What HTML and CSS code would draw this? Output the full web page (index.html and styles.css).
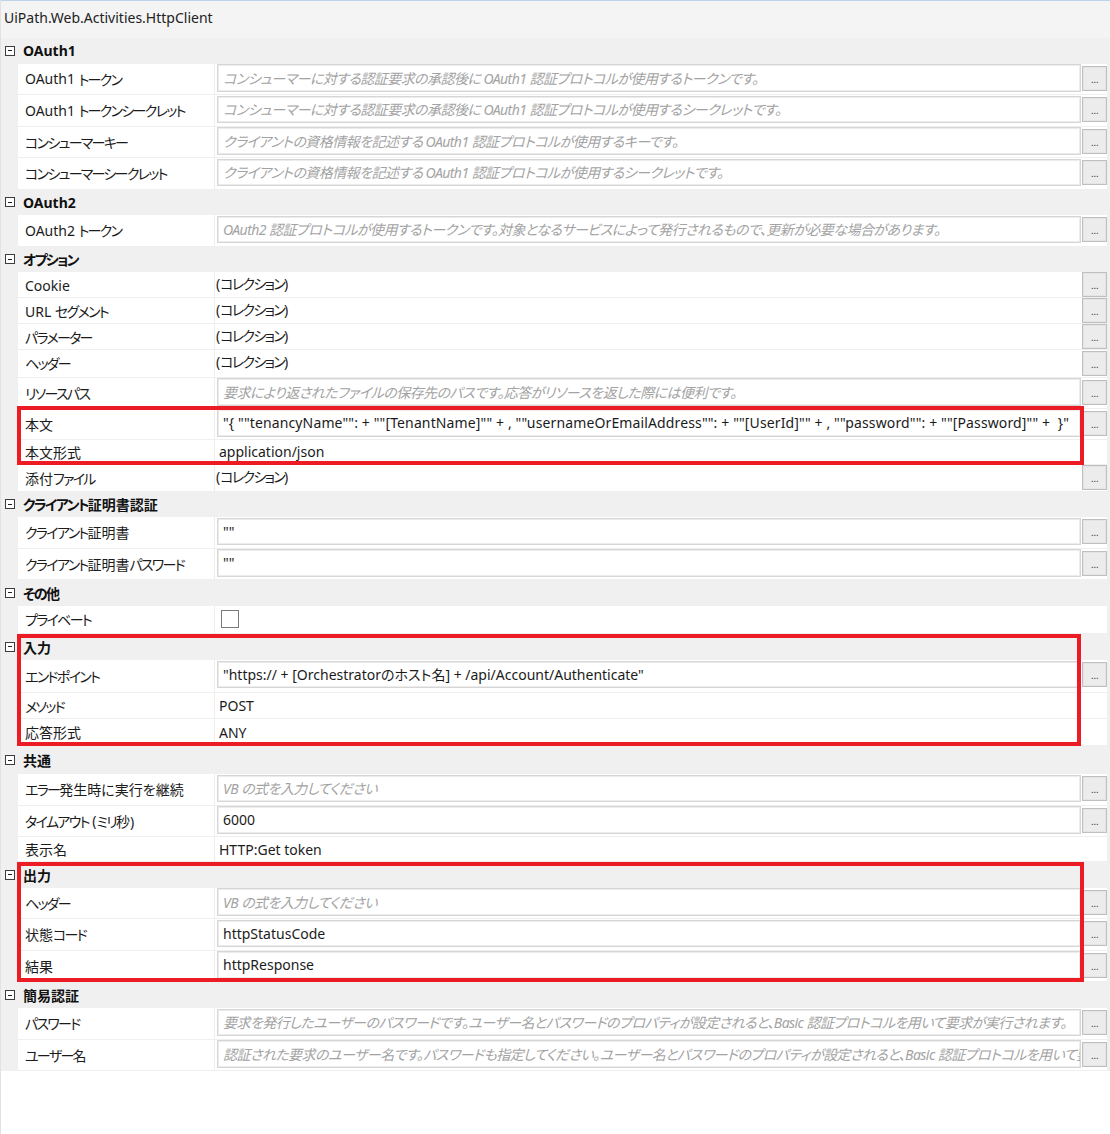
FILE: index.html
```html
<!DOCTYPE html>
<html lang="ja">
<head>
<meta charset="utf-8">
<title>HttpClient Properties</title>
<link rel="stylesheet" href="styles.css">
</head>
<body>
<div class="pg">
  <div class="title">UiPath.Web.Activities.HttpClient</div>

  <div class="cat"><span class="tog"></span><span class="cat-name">OAuth1</span></div>
  <div class="row tb"><div class="lbl">OAuth1&nbsp;<span class="k">トークン</span></div><div class="val"><div class="box ph">コンシューマーに対する認証要求の承認後に OAuth1 認証プロトコルが使用するトークンです。</div></div><div class="bc"><span class="btn">...</span></div></div>
  <div class="row tb"><div class="lbl">OAuth1&nbsp;<span class="k">トークンシークレット</span></div><div class="val"><div class="box ph">コンシューマーに対する認証要求の承認後に OAuth1 認証プロトコルが使用するシークレットです。</div></div><div class="bc"><span class="btn">...</span></div></div>
  <div class="row tb"><div class="lbl"><span class="k">コンシューマーキー</span></div><div class="val"><div class="box ph">クライアントの資格情報を記述する OAuth1 認証プロトコルが使用するキーです。</div></div><div class="bc"><span class="btn">...</span></div></div>
  <div class="row tb"><div class="lbl"><span class="k">コンシューマーシークレット</span></div><div class="val"><div class="box ph">クライアントの資格情報を記述する OAuth1 認証プロトコルが使用するシークレットです。</div></div><div class="bc"><span class="btn">...</span></div></div>

  <div class="cat"><span class="tog"></span><span class="cat-name">OAuth2</span></div>
  <div class="row tb"><div class="lbl">OAuth2&nbsp;<span class="k">トークン</span></div><div class="val"><div class="box ph">OAuth2 認証プロトコルが使用するトークンです。対象となるサービスによって発行されるもので、更新が必要な場合があります。</div></div><div class="bc"><span class="btn">...</span></div></div>

  <div class="cat"><span class="tog"></span><span class="cat-name"><span class="k">オプション</span></span></div>
  <div class="row"><div class="lbl">Cookie</div><div class="val"><span class="plain up">(<span class="k">コレクション</span>)</span></div><div class="bc"><span class="btn">...</span></div></div>
  <div class="row"><div class="lbl">URL&nbsp;<span class="k">セグメント</span></div><div class="val"><span class="plain up">(<span class="k">コレクション</span>)</span></div><div class="bc"><span class="btn">...</span></div></div>
  <div class="row"><div class="lbl"><span class="k">パラメーター</span></div><div class="val"><span class="plain up">(<span class="k">コレクション</span>)</span></div><div class="bc"><span class="btn">...</span></div></div>
  <div class="row r275"><div class="lbl"><span class="k">ヘッダー</span></div><div class="val"><span class="plain up">(<span class="k">コレクション</span>)</span></div><div class="bc"><span class="btn">...</span></div></div>
  <div class="row tb r31"><div class="lbl"><span class="k">リソースパス</span></div><div class="val"><div class="box ph">要求により返されたファイルの保存先のパスです。応答がリソースを返した際には便利です。</div></div><div class="bc"><span class="btn">...</span></div></div>
  <div class="mark mark-body">
    <div class="row tb r31"><div class="lbl">本文</div><div class="val"><div class="box code">"{ ""tenancyName"": + ""[TenantName]"" + , ""usernameOrEmailAddress"": + ""[UserId]"" + , ""password"": + ""[Password]"" +  }"</div></div><div class="bc"><span class="btn">...</span></div></div>
    <div class="row r255"><div class="lbl">本文形式</div><div class="val"><span class="plain ind">application/json</span></div><div class="bc"></div></div>
  </div>
  <div class="row r265"><div class="lbl">添付<span class="k">ファイル</span></div><div class="val"><span class="plain up">(<span class="k">コレクション</span>)</span></div><div class="bc"><span class="btn">...</span></div></div>

  <div class="cat"><span class="tog"></span><span class="cat-name"><span class="k">クライアント</span>証明書認証</span></div>
  <div class="row tb"><div class="lbl"><span class="k">クライアント</span>証明書</div><div class="val"><div class="box">""</div></div><div class="bc"><span class="btn">...</span></div></div>
  <div class="row tb"><div class="lbl"><span class="k">クライアント</span>証明書<span class="k">パスワード</span></div><div class="val"><div class="box">""</div></div><div class="bc"><span class="btn">...</span></div></div>

  <div class="cat"><span class="tog"></span><span class="cat-name"><span class="k">その</span>他</span></div>
  <div class="row r28"><div class="lbl"><span class="k">プライベート</span></div><div class="val"><span class="cb"></span></div><div class="bc"></div></div>

  <div class="mark mark-in">
    <div class="cat c265"><span class="tog"></span><span class="cat-name">入力</span></div>
    <div class="row tb r33"><div class="lbl"><span class="k">エンドポイント</span></div><div class="val"><div class="box">"https:// + [Orchestratorのホスト名] + /api/Account/Authenticate"</div></div><div class="bc"><span class="btn">...</span></div></div>
    <div class="row"><div class="lbl"><span class="k">メソッド</span></div><div class="val"><span class="plain ind">POST</span></div><div class="bc"></div></div>
    <div class="row r27"><div class="lbl">応答形式</div><div class="val"><span class="plain ind">ANY</span></div><div class="bc"></div></div>
  </div>

  <div class="cat c28"><span class="tog"></span><span class="cat-name">共通</span></div>
  <div class="row tb"><div class="lbl"><span class="k">エラー</span>発生時に実行を継続</div><div class="val"><div class="box ph">VB の式を入力してください</div></div><div class="bc"><span class="btn">...</span></div></div>
  <div class="row tb"><div class="lbl"><span class="k">タイムアウト</span>&nbsp;(<span class="k">ミリ</span>秒)</div><div class="val"><div class="box">6000</div></div><div class="bc"><span class="btn">...</span></div></div>
  <div class="row r25"><div class="lbl">表示名</div><div class="val"><span class="plain ind">HTTP:Get token</span></div><div class="bc"></div></div>

  <div class="mark mark-out">
    <div class="cat"><span class="tog"></span><span class="cat-name">出力</span></div>
    <div class="row tb"><div class="lbl"><span class="k">ヘッダー</span></div><div class="val"><div class="box ph">VB の式を入力してください</div></div><div class="bc"><span class="btn">...</span></div></div>
    <div class="row tb"><div class="lbl">状態<span class="k">コード</span></div><div class="val"><div class="box">httpStatusCode</div></div><div class="bc"><span class="btn">...</span></div></div>
    <div class="row tb"><div class="lbl">結果</div><div class="val"><div class="box">httpResponse</div></div><div class="bc"><span class="btn">...</span></div></div>
  </div>

  <div class="cat c26"><span class="tog"></span><span class="cat-name">簡易認証</span></div>
  <div class="row tb"><div class="lbl"><span class="k">パスワード</span></div><div class="val"><div class="box ph">要求を発行したユーザーのパスワードです。ユーザー名とパスワードのプロパティが設定されると、Basic 認証プロトコルを用いて要求が実行されます。</div></div><div class="bc"><span class="btn">...</span></div></div>
  <div class="row tb"><div class="lbl"><span class="k">ユーザー</span>名</div><div class="val"><div class="box ph">認証された要求のユーザー名です。パスワードも指定してください。ユーザー名とパスワードのプロパティが設定されると、Basic 認証プロトコルを用いて要求が実行されます。</div></div><div class="bc"><span class="btn">...</span></div></div>
</div>
</body>
</html>
```

FILE: styles.css
```css
html, body {
  margin: 0;
  padding: 0;
  background: #ffffff;
}

body {
  width: 1110px;
  height: 1134px;
  overflow: hidden;
  font-family: "Noto Sans", "Noto Sans CJK JP", sans-serif;
  font-size: 14px;
  color: #1b1b1b;
  font-feature-settings: "palt" 1;
  border-left: 1px solid #e2e2e2;
  box-sizing: border-box;
}

.k {
  letter-spacing: -1.7px;
}

.pg {
  background: #f0f0f0;
  border-top: 1px solid #bcd3ea;
}

.title {
  height: 37px;
  line-height: 33px;
  padding-left: 3px;
  font-size: 14px;
  color: #222;
  background: #f4f4f4;
}

.cat {
  height: 25.5px;
  display: flex;
  align-items: center;
  background: #f0f0f0;
}

.cat.c26 {
  height: 26px;
}

.cat.c265 {
  height: 26.5px;
}

.cat.c28 {
  height: 28px;
}

.tog {
  width: 8px;
  height: 8px;
  border: 1px solid #3c3c3c;
  margin-left: 4px;
  margin-right: 8px;
  position: relative;
  background: #fff;
  flex: none;
}

.tog::after {
  content: "";
  position: absolute;
  left: 2px;
  right: 2px;
  top: 3.5px;
  height: 1px;
  background: #222;
}

.cat-name {
  font-weight: 700;
  color: #111;
}

.row {
  display: grid;
  grid-template-columns: 197px 1fr 26px;
  height: 26px;
  margin-left: 17px;
  margin-right: 3px;
  background: #fff;
  border-bottom: 1px solid #efefef;
  box-sizing: border-box;
}

.row.tb {
  height: 31.5px;
}

.row.r25 {
  height: 25px;
}

.row.r255 {
  height: 25.5px;
}

.row.r265 {
  height: 26.5px;
}

.row.r27 {
  height: 27px;
}

.row.r275 {
  height: 27.5px;
}

.row.r28 {
  height: 28px;
}

.row.tb.r31 {
  height: 31px;
}

.row.tb.r33 {
  height: 33px;
}

.lbl {
  padding-left: 7px;
  display: flex;
  align-items: center;
  border-right: 1px solid #ededed;
  white-space: nowrap;
}

.val {
  display: flex;
  align-items: center;
  min-width: 0;
  padding-left: 2px;
}

.tb .val {
  align-items: flex-start;
}

.box {
  flex: 1;
  min-width: 0;
  height: 27.5px;
  margin-top: 0.5px;
  box-sizing: border-box;
  border: 1px solid #d6d6d6;
  box-shadow: inset 0 0 0 1px #ececec;
  padding-left: 5px;
  display: flex;
  align-items: center;
  white-space: pre;
  overflow: hidden;
  color: #1b1b1b;
}

.box.ph {
  color: #a3a3a3;
  font-style: italic;
  letter-spacing: -0.55px;
}

.box.code {
  letter-spacing: 0.13px;
}

.plain {
  white-space: nowrap;
}

.plain.up {
  margin-top: -4px;
  margin-left: -1px;
}

.plain.ind {
  margin-left: 2px;
}

.cb {
  width: 16px;
  height: 16px;
  border: 1px solid #7a7a7a;
  background: #fff;
  margin-left: 4px;
}

.bc {
  display: flex;
  align-items: flex-end;
  justify-content: flex-start;
  padding-left: 1px;
  padding-bottom: 1px;
}

.tb .bc {
  align-items: flex-start;
  padding-top: 2px;
  padding-bottom: 0;
}

.btn {
  width: 25px;
  height: 25px;
  box-sizing: border-box;
  border: 1px solid #bfbfbf;
  box-shadow: inset 0 0 0 1px #e4e4e4;
  background: #ececec;
  color: #444;
  font-size: 11px;
  line-height: 1;
  display: flex;
  align-items: flex-end;
  justify-content: center;
  padding-bottom: 5px;
  letter-spacing: -0.5px;
  font-family: "Liberation Sans", sans-serif;
  font-style: normal;
}

.mark {
  position: relative;
}

.mark::after {
  content: "";
  position: absolute;
  border: 4px solid #ed1c24;
  pointer-events: none;
}

.mark-body::after {
  left: 16px;
  top: -3px;
  right: 26px;
  bottom: 0;
}

.mark-in::after {
  left: 16px;
  top: 0;
  right: 29px;
  bottom: 0;
}

.mark-out::after {
  left: 16px;
  top: 0;
  right: 26px;
  bottom: 0;
}
```
